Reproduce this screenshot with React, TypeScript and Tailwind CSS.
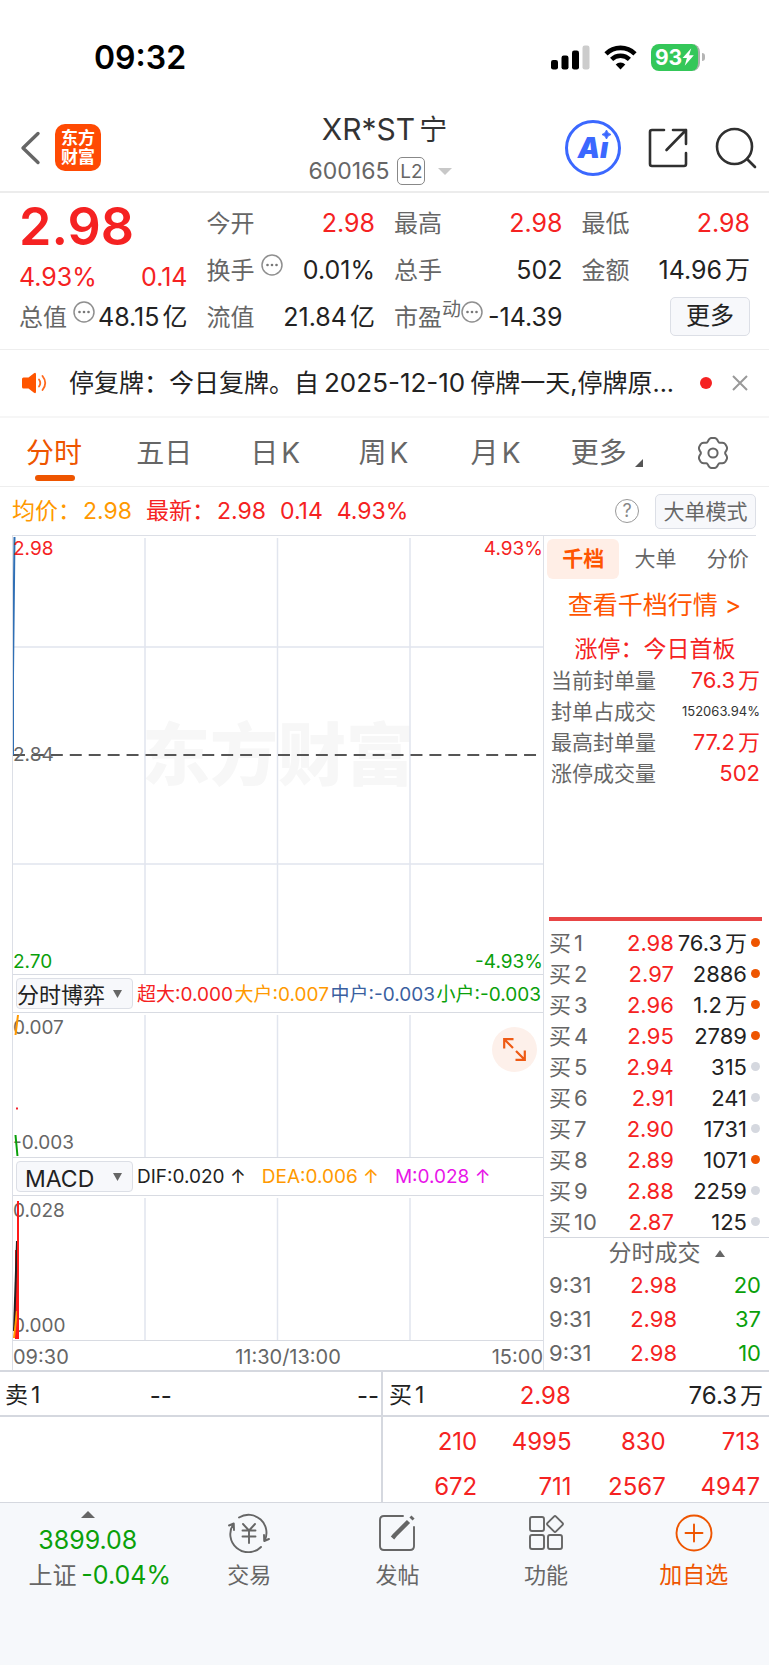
import type { ReactNode } from "react";

const RED = "text-[#f52222]";
const GREEN = "text-[#0aa00a]";

const bids = [
  { level: 1, price: "2.98", volume: "76.3", unit: "万", hot: true },
  { level: 2, price: "2.97", volume: "2886", unit: "", hot: true },
  { level: 3, price: "2.96", volume: "1.2", unit: "万", hot: true },
  { level: 4, price: "2.95", volume: "2789", unit: "", hot: true },
  { level: 5, price: "2.94", volume: "315", unit: "", hot: false },
  { level: 6, price: "2.91", volume: "241", unit: "", hot: false },
  { level: 7, price: "2.90", volume: "1731", unit: "", hot: false },
  { level: 8, price: "2.89", volume: "1071", unit: "", hot: true },
  { level: 9, price: "2.88", volume: "2259", unit: "", hot: false },
  { level: 10, price: "2.87", volume: "125", unit: "", hot: false },
];

const trades = [
  { time: "9:31", price: "2.98", volume: "20" },
  { time: "9:31", price: "2.98", volume: "37" },
  { time: "9:31", price: "2.98", volume: "10" },
];

const queue = [
  ["210", "4995", "830", "713"],
  ["672", "711", "2567", "4947"],
];

function Unit({ children }: { children: ReactNode }) {
  return <span className="ml-[3px]">{children}</span>;
}

function MoreDots() {
  return (
    <svg className="mb-3 h-[22px] w-[22px] shrink-0" viewBox="0 0 22 22" fill="none" aria-hidden="true">
      <circle cx="11" cy="11" r="10" stroke="#8f8f8f" strokeWidth="1.5" />
      <circle cx="6.5" cy="11" r="1.3" fill="#777" />
      <circle cx="11" cy="11" r="1.3" fill="#777" />
      <circle cx="15.5" cy="11" r="1.3" fill="#777" />
    </svg>
  );
}

function Metric({
  label,
  mark,
  dots,
  value,
  unit,
  tone = "text-[#222]",
}: {
  label: string;
  mark?: string;
  dots?: boolean;
  value: string;
  unit?: string;
  tone?: string;
}) {
  return (
    <div className="flex h-[47px] items-center whitespace-nowrap">
      <span className="text-2xl text-[#666]">{label}</span>
      {mark && <span className="mb-4 text-[19px] leading-none text-[#666]">{mark}</span>}
      {dots && <span className={mark ? "" : "ml-1.5"}><MoreDots /></span>}
      <span className={`ml-auto ${tone}`}>
        {value}
        {unit && <Unit>{unit}</Unit>}
      </span>
    </div>
  );
}

function StatusBar() {
  return (
    <div className="flex h-[104px] items-center justify-between pt-2.5 pr-16 pl-[94px] text-black">
      <span className="pt-0.5 text-[32px] leading-10 font-semibold">09:32</span>
      <div className="flex items-center gap-3.5">
        <svg className="h-[25px] w-[39px]" viewBox="0 0 39 25" aria-hidden="true">
          <rect x="0" y="15" width="7" height="9.5" rx="2.2" />
          <rect x="10.5" y="10.5" width="7" height="14" rx="2.2" />
          <rect x="21" y="5.5" width="7" height="19" rx="2.2" />
          <rect x="31.5" y="0.5" width="7" height="24" rx="2.2" fill="#ccc" />
        </svg>
        <svg className="h-[25px] w-[33px]" viewBox="0 0 33 25" fill="none" stroke="#000" aria-hidden="true">
          <path d="M2 8.8a20.6 20.6 0 0 1 29 0" strokeWidth="4.6" />
          <path d="M7.6 14.4a12.6 12.6 0 0 1 17.8 0" strokeWidth="4.4" />
          <path d="M16.500 24.500 11.700 19.600a6.800 6.800 0 0 1 9.600 0Z" fill="#000" stroke="none" />
        </svg>
        <div className="flex items-center">
          <div className="flex h-[27px] w-[49px] items-center justify-center rounded-lg border-r-2 border-[#a9b0ab] bg-[#34c759] text-white">
            <span className="text-[21px] leading-none font-bold">93</span>
            <svg className="h-[18px] w-3" viewBox="0 0 11 16" fill="#fff" aria-hidden="true">
              <path d="M8.500 0 0.500 9h4L2.500 16 10.800 6.500H6.500Z" />
            </svg>
          </div>
          <div className="ml-0.5 h-2 w-[3px] rounded-r-full bg-[#b5b5b5]" />
        </div>
      </div>
    </div>
  );
}

function Header() {
  return (
    <header className="grid h-[89px] grid-cols-[1fr_auto_1fr] items-center border-b-2 border-[#ececec] px-3">
      <div className="flex items-center gap-[14px] pl-2">
        <button aria-label="返回" className="block">
          <svg className="h-[34px] w-[21px]" viewBox="0 0 21 34" fill="none" stroke="#666" strokeWidth="3.400" strokeLinecap="round" strokeLinejoin="round">
            <path d="M18 2.500 3 17 18 31.500" />
          </svg>
        </button>
        <a href="#home" className="flex h-[47px] w-[46px] flex-col items-center justify-center rounded-[10px] bg-[#ff4a03] text-[17px] leading-[19px] font-bold text-white">
          <span>东方</span>
          <span>财富</span>
        </a>
      </div>
      <div className="flex flex-col items-center pt-1">
        <h1 className="text-[30px] leading-[42px] text-[#333]">XR*ST<span className="ml-1 text-[28px]">宁</span></h1>
        <button className="mr-2 flex h-10 items-center text-[23px] text-[#666]">
          600165
          <span className="ml-2 flex h-7 w-7 items-center justify-center rounded-[5px] border border-[#888] text-[19px] leading-none">L2</span>
          <svg className="ml-[13px] h-[7px] w-[14px]" viewBox="0 0 14 7" fill="#c8c8c8" aria-hidden="true"><path d="M0 0h14L7 7Z" /></svg>
        </button>
      </div>
      <div className="flex items-center justify-end gap-[27px]">
        <button aria-label="Ai" className="relative flex h-14 w-14 items-center justify-center rounded-full border-[3px] border-[#3b68ff] text-[28px] leading-none font-black text-[#3b68ff] italic">
          <span>Aı</span>
          <svg className="absolute top-[7px] right-[7px] h-[9px] w-[9px]" viewBox="0 0 10 10" fill="#3b68ff" aria-hidden="true">
            <path d="M5 0Q6 4 10 5Q6 6 5 10Q4 6 0 5Q4 4 5 0Z" stroke="#3b68ff" strokeWidth="1" />
          </svg>
        </button>
        <button aria-label="分享">
          <svg className="h-10 w-10" viewBox="0 0 40 40" fill="none" stroke="#303030" strokeWidth="2.600" strokeLinecap="round" strokeLinejoin="round">
            <path d="M16 2H4Q2 2 2 4V36Q2 38 4 38H36Q38 38 38 36V25M25 2H38V16M38 2 18.500 22" />
          </svg>
        </button>
        <button aria-label="搜索">
          <svg className="h-[42px] w-[42px]" viewBox="0 0 42 42" fill="none" stroke="#303030" strokeWidth="2.600" strokeLinecap="round">
            <circle cx="19.500" cy="19.500" r="17.500" />
            <path d="M32 32 40 40" />
          </svg>
        </button>
      </div>
    </header>
  );
}

function Summary() {
  return (
    <section className="grid grid-cols-4 gap-x-[19px] border-b border-[#eee] px-[19px] pt-[7px] pb-2 text-[25px]">
      <div>
        <div className={`h-[56px] text-[52px] leading-[54px] font-semibold ${RED}`}>2.98</div>
        <div className={`flex h-[38px] items-end justify-between leading-[34px] ${RED}`}>
          <span>4.93%</span>
          <span>0.14</span>
        </div>
        <Metric label="总值" dots value="48.15" unit="亿" />
      </div>
      <div>
        <Metric label="今开" value="2.98" tone={RED} />
        <Metric label="换手" dots value="0.01%" />
        <Metric label="流值" value="21.84" unit="亿" />
      </div>
      <div>
        <Metric label="最高" value="2.98" tone={RED} />
        <Metric label="总手" value="502" />
        <Metric label="市盈" mark="动" dots value="-14.39" />
      </div>
      <div>
        <Metric label="最低" value="2.98" tone={RED} />
        <Metric label="金额" value="14.96" unit="万" />
        <div className="flex h-[47px] items-center justify-end pb-[3px]">
          <button className="h-[39px] w-20 rounded-[5px] border border-[#dcdfe6] bg-[#f7f8fb] text-2xl leading-none text-[#222]">更多</button>
        </div>
      </div>
    </section>
  );
}

function Notice() {
  return (
    <section className="flex h-[68px] items-center border-b-2 border-[#f6f6f6] px-[21px]">
      <svg className="h-[22px] w-[27px] shrink-0" viewBox="0 0 27 22" fill="none" aria-hidden="true">
        <path d="M2.500 5.500h5L13 1.300Q15 0 15 2.500v17Q15 22 13 20.700L7.500 16.500h-5Q1 16.500 1 15V7Q1 5.500 2.500 5.500Z" fill="#ff5500" />
        <path d="M18 7.500q2.600 3.500 0 7" stroke="#ff6a1f" strokeWidth="1.800" strokeLinecap="round" />
        <path d="M21.500 4q5.500 7 0 14" stroke="#ff6a1f" strokeWidth="1.800" strokeLinecap="round" />
      </svg>
      <p className="ml-[21px] min-w-0 flex-1 truncate text-[25px] leading-9 text-[#222]">
        停复牌：今日复牌。自<span className="mx-[5px] text-[26px]">2025-12-10</span>停牌一天,停牌原...
      </p>
      <span className="ml-4 h-3 w-3 shrink-0 rounded-full bg-[#f52222]" />
      <button aria-label="关闭" className="ml-5 shrink-0">
        <svg className="h-4 w-4" viewBox="0 0 16 16" stroke="#999" strokeWidth="2"><path d="M1 1 15 15M15 1 1 15" /></svg>
      </button>
    </section>
  );
}

function gearOutline() {
  const points: string[] = [];
  for (let deg = 0; deg < 360; deg += 4) {
    const a = (deg * Math.PI) / 180;
    const r = 14 + 1.5 * Math.cos(6 * a - Math.PI) - 0.4 * Math.cos(12 * a);
    points.push(`${(17 + r * Math.cos(a)).toFixed(2)},${(17 + r * Math.sin(a)).toFixed(2)}`);
  }
  return points.join(" ");
}

function PeriodTabs() {
  const tab = "h-full text-left whitespace-nowrap";
  return (
    <nav className="grid h-[69px] grid-cols-[110fr_114fr_108fr_112fr_100fr_125fr_56fr] items-center border-b border-[#eee] pt-0.5 pr-[17px] pl-[26px] text-[28px] text-[#666]">
      <button className={`${tab} relative text-[#ee5500]`}>
        分时
        <span className="absolute bottom-[5px] left-[9px] h-1.5 w-10 rounded-full bg-[#ee5500]" />
      </button>
      <button className={tab}>五日</button>
      <button className={tab}>日<Unit>K</Unit></button>
      <button className={tab}>周<Unit>K</Unit></button>
      <button className={tab}>月<Unit>K</Unit></button>
      <button className={`${tab} flex items-center`}>
        更多
        <svg className="mt-5 ml-2 h-2 w-2" viewBox="0 0 8 8" fill="#555" aria-hidden="true"><path d="M8 0v8H0Z" /></svg>
      </button>
      <button aria-label="设置">
        <svg className="h-[34px] w-[34px]" viewBox="0 0 34 34" fill="none" stroke="#666" strokeWidth="2" strokeLinejoin="round">
          <polygon points={gearOutline()} />
          <circle cx="17" cy="17" r="4.600" />
        </svg>
      </button>
    </nav>
  );
}

function PriceLine() {
  return (
    <div className={`mr-[13px] ml-3 flex h-[49px] items-center border-b border-[#dcdfe6] text-[23px] whitespace-nowrap ${RED}`}>
      <span className="text-[#ff9900]">均价：<span className="ml-0.5">2.98</span></span>
      <span className="ml-3.5">最新：<span className="ml-0.5">2.98</span></span>
      <span className="ml-3.5">0.14</span>
      <span className="ml-3.5">4.93%</span>
      <button aria-label="说明" className="ml-auto flex h-6 w-6 items-center justify-center rounded-full border-[1.5px] border-[#999] text-lg leading-none text-[#888]">?</button>
      <button className="ml-4 h-[35px] w-[101px] rounded-[5px] border border-[#dcdfe6] bg-[#f7f8fb] text-[21px] leading-none text-[#666]">大单模式</button>
    </div>
  );
}

function GridLines({ rows }: { rows?: boolean }) {
  return (
    <g stroke="#e1e5ee" strokeWidth="1.500">
      <path d="M132.500 2V1000M265.500 2V1000M398.500 2V1000" vectorEffect="non-scaling-stroke" />
      {rows && <path d="M0 111H532M0 328H532" vectorEffect="non-scaling-stroke" />}
    </g>
  );
}

const panelLabel = "absolute text-[19px] leading-6";

function TrendChart() {
  return (
    <div className="relative h-[439px] border-b border-[#d8dbe2]">
      <div className="absolute inset-0 flex items-center justify-center text-[68px] leading-none font-black text-[#f7f7f7]">东方财富</div>
      <svg className="absolute inset-0 h-full w-full" viewBox="0 0 532 438" preserveAspectRatio="none" aria-hidden="true">
        <GridLines rows />
        <path d="M0 219H532" stroke="#555" strokeWidth="2" strokeDasharray="12 7" />
        <path d="M0 219V140L1.500 1" fill="none" stroke="#2f6fb5" strokeWidth="2" />
      </svg>
      <span className={`${panelLabel} top-px left-0 ${RED}`}>2.98</span>
      <span className={`${panelLabel} top-px right-0 ${RED}`}>4.93%</span>
      <span className={`${panelLabel} top-[207px] left-0 text-[#666]`}>2.84</span>
      <span className={`${panelLabel} bottom-0 left-0 ${GREEN}`}>2.70</span>
      <span className={`${panelLabel} right-0 bottom-0 ${GREEN}`}>-4.93%</span>
    </div>
  );
}

function IndicatorSelect({ label, options, pad }: { label: string; options: string[]; pad: string }) {
  return (
    <div className="relative ml-[3px] shrink-0">
      <select aria-label={label} className={`block h-[31px] w-[117px] appearance-none rounded-[4px] border border-[#dcdfe6] bg-[#f7f8fb] text-[#222] ${pad}`}>
        {options.map((o) => (
          <option key={o}>{o}</option>
        ))}
      </select>
      <svg className="pointer-events-none absolute top-[12px] right-[11px] h-2 w-[9px]" viewBox="0 0 9 8" fill="#666" aria-hidden="true"><path d="M0 0h9L4.500 8Z" /></svg>
    </div>
  );
}

function FlowPanel() {
  return (
    <>
      <div className="flex h-[38px] items-center border-b border-[#d8dbe2] whitespace-nowrap">
        <IndicatorSelect label="资金指标" options={["分时博弈"]} pad="text-[22px]" />
        <div className="flex flex-1 justify-between pt-[3px] pr-0.5 pl-1 text-[19px]">
          <span className={RED}>超大:0.000</span>
          <span className="text-[#ff9900]">大户:0.007</span>
          <span className="text-[#3a5fa0]">中户:-0.003</span>
          <span className={GREEN}>小户:-0.003</span>
        </div>
      </div>
      <div className="relative h-[145px] border-b border-[#d8dbe2]">
        <span className={`${panelLabel} top-[3px] left-0 text-[#666]`}>0.007</span>
        <span className={`${panelLabel} bottom-0.5 left-0 text-[#666]`}>-0.003</span>
        <svg className="absolute inset-0 h-full w-full" viewBox="0 0 532 144" preserveAspectRatio="none" fill="none" aria-hidden="true">
          <GridLines />
          <path d="M2.500 22 5 2" stroke="#ff9900" strokeWidth="2" />
          <path d="M2.500 122 4.500 143" stroke="#0aa00a" strokeWidth="2" />
          <path d="M3 95.500h2" stroke="#f5222d" strokeWidth="2" />
        </svg>
        <button aria-label="展开" className="absolute top-3.5 right-[6px] flex h-[45px] w-[45px] items-center justify-center rounded-full bg-[#fdf0ea]">
          <svg className="h-[23px] w-[23px]" viewBox="0 0 23 23" fill="none" stroke="#ee5a14" strokeWidth="2.200">
            <path d="M1.200 10.500V1.200H10.500M1.500 1.500 10 10M21.800 12.500V21.800H12.500M21.500 21.500 13 13" />
          </svg>
        </button>
      </div>
    </>
  );
}

function MacdPanel() {
  return (
    <>
      <div className="flex h-[38px] items-center border-b border-[#d8dbe2] whitespace-nowrap">
        <IndicatorSelect label="技术指标" options={["MACD"]} pad="pl-2 text-[23px]" />
        <div className="flex gap-4 pt-0.5 pl-1 text-[19px]">
          <span className="text-[#222]">DIF:0.020 ↑</span>
          <span className="text-[#ff9900]">DEA:0.006 ↑</span>
          <span className="text-[#e815e8]">M:0.028 ↑</span>
        </div>
      </div>
      <div className="relative h-[145px] border-b border-[#d8dbe2]">
        <span className={`${panelLabel} top-[3px] left-0 text-[#666]`}>0.028</span>
        <span className={`${panelLabel} bottom-0.5 left-0 text-[#666]`}>0.000</span>
        <svg className="absolute inset-0 h-full w-full" viewBox="0 0 532 144" preserveAspectRatio="none" fill="none" aria-hidden="true">
          <GridLines />
          <path d="M3 54V143" stroke="#ff1a1a" strokeWidth="2" />
          <path d="M1 135 4 45" stroke="#222" strokeWidth="2" />
          <path d="M1 142 4 115" stroke="#ff9900" strokeWidth="2" />
          <path d="M5 5V143" stroke="#ff1a1a" strokeWidth="2" />
        </svg>
      </div>
    </>
  );
}

function SidePanel() {
  const stat = "flex h-[31px] items-center justify-between";
  return (
    <aside className="flex w-[225px] shrink-0 flex-col text-[22px] whitespace-nowrap">
      <div className="mt-[3px] grid h-10 grid-cols-3 pr-[5px] pl-[3px] text-[21px] text-[#666]">
        <button className="rounded-md bg-[#ffeee6] font-bold text-[#ff5500]">千档</button>
        <button>大单</button>
        <button>分价</button>
      </div>
      <a href="#depth" className="mt-2 mr-1 block text-center text-[25px] leading-9 text-[#ff5500]">查看千档行情 &gt;</a>
      <div className={`mt-2 mr-[3px] text-center text-[23px] leading-9 ${RED}`}>涨停：今日首板</div>
      <div className={`-mt-0.5 pr-[9px] pl-[7px] ${RED}`}>
        <div className={stat}><span className="text-[21px] text-[#666]">当前封单量</span><span>76.3<Unit>万</Unit></span></div>
        <div className={stat}><span className="text-[21px] text-[#666]">封单占成交</span><span className="text-[13px] text-[#333]">152063.94%</span></div>
        <div className={stat}><span className="text-[21px] text-[#666]">最高封单量</span><span>77.2<Unit>万</Unit></span></div>
        <div className={stat}><span className="text-[21px] text-[#666]">涨停成交量</span><span>502</span></div>
      </div>
      <div className="mt-[128px] mr-[7px] ml-[5px] h-1 bg-[#e84545]" />
      <div className="mt-[6px] border-b border-[#d5d8df] pr-[9px] pl-[5px]">
        <table className="w-full border-collapse leading-[30px]">
          <tbody>
            {bids.map((b) => (
              <tr key={b.level} className="h-[31px]">
                <td className="w-[46px] p-0 text-[#666]">买<Unit>{b.level}</Unit></td>
                <td className={`w-[77px] p-0 text-right ${RED}`}>{b.price}</td>
                <td className="p-0 text-right text-[#222]">{b.volume}{b.unit && <Unit>{b.unit}</Unit>}</td>
                <td className="w-[13px] p-0"><span className={`ml-auto block h-[9px] w-[9px] rounded-full ${b.hot ? "bg-[#ee5500]" : "bg-[#d5d8df]"}`} /></td>
              </tr>
            ))}
          </tbody>
        </table>
      </div>
      <button className="flex h-[30px] items-center justify-center pl-5 text-[23px] text-[#666]">
        分时成交
        <svg className="ml-3.5 h-[7px] w-[10px]" viewBox="0 0 10 7" fill="#666" aria-hidden="true"><path d="M0 7h10L5 0Z" /></svg>
      </button>
      <div className="pr-2 pl-[5px]">
        <table className="w-full border-collapse leading-[33px]">
          <tbody>
            {trades.map((t) => (
              <tr key={t.volume} className="h-[34px]">
                <td className="w-[46px] p-0 text-[#666]">{t.time}</td>
                <td className={`w-[82px] p-0 text-right ${RED}`}>{t.price}</td>
                <td className={`p-0 text-right ${GREEN}`}>{t.volume}</td>
              </tr>
            ))}
          </tbody>
        </table>
      </div>
    </aside>
  );
}

function TopOfBook() {
  const row = "grid h-[45px] grid-cols-3 items-center border-b-2 border-[#d5d8df] pt-1";
  return (
    <section className="grid grid-cols-[383fr_386fr] border-t-2 border-b border-[#d5d8df] text-2xl text-[#222]">
      <div className="border-r-2 border-[#d5d8df]">
        <div className={`${row} pr-0.5 pl-[5px]`}>
          <span className="text-[23px]">卖<Unit>1</Unit></span>
          <span className="pl-5">--</span>
          <span className="text-right">--</span>
        </div>
      </div>
      <div>
        <div className={`${row} px-1.5`}>
          <span className="text-[23px]">买<Unit>1</Unit></span>
          <span className={`pl-1.5 ${RED}`}>2.98</span>
          <span className="text-right">76.3<span className="ml-[3px] text-[23px]">万</span></span>
        </div>
        <div className="pt-0.5 pr-[9px]">
          <table className={`mb-[-7px] w-full table-fixed border-collapse ${RED}`}>
            <tbody>
              {queue.map((values) => (
                <tr key={values[0]} className="h-[45px]">
                  {values.map((v) => (
                    <td key={v} className="p-0 text-right">{v}</td>
                  ))}
                </tr>
              ))}
            </tbody>
          </table>
        </div>
      </div>
    </section>
  );
}

function Footer() {
  const item = "flex flex-col items-center gap-1.5 pt-[10px] text-[22px] leading-8";
  const svg = { fill: "none", stroke: "currentColor", strokeWidth: 1.9, strokeLinecap: "round", strokeLinejoin: "round" } as const;
  return (
    <footer className="grid flex-1 grid-cols-[176fr_148fr_149fr_149fr_147fr] bg-[#f6f8fb] pr-0.5 pb-[72px] text-[#666]">
      <button className="flex flex-col items-center pt-2 text-2xl whitespace-nowrap">
        <svg className="h-[7px] w-[14px]" viewBox="0 0 14 7" fill="#666" aria-hidden="true"><path d="M0 7h14L7 0Z" /></svg>
        <span className={`mt-[5px] text-[25px] leading-[35px] ${GREEN}`}>3899.08</span>
        <span className="ml-6 leading-[35px]">上证 <span className={`-ml-0.5 text-[25px] ${GREEN}`}>-0.04%</span></span>
      </button>
      <button className={item}>
        <svg className="h-10 w-[44px]" viewBox="0 0 44 40" {...svg} aria-hidden="true">
          <path d="M12 4.500A18 18 0 0 1 37.500 28M34 34A18 18 0 0 1 6.500 11M2 12.500 6.800 10.500 7 17M42 26 37.200 28 37 22" />
          <path d="M16 11l6 6.500L28 11M15.500 17.500h13M15.500 23.500h13M22 17.500V30" />
        </svg>
        交易
      </button>
      <button className={item}>
        <svg className="h-10 w-10" viewBox="0 0 40 40" {...svg} aria-hidden="true">
          <path d="M26 3H7Q3 3 3 7V33Q3 37 7 37H33Q37 37 37 33V14" />
          <path d="M31.500 8.500 18 22 15.500 25" strokeWidth="4.400" strokeLinecap="butt" />
          <path d="M34 6 36 4" strokeWidth="4.400" strokeLinecap="butt" />
        </svg>
        发帖
      </button>
      <button className={item}>
        <svg className="h-10 w-10" viewBox="0 0 40 40" {...svg} aria-hidden="true">
          <rect x="4" y="4" width="14" height="14" rx="2" />
          <rect x="4" y="22" width="14" height="14" rx="2" />
          <rect x="22" y="22" width="14" height="14" rx="2" />
          <rect x="23" y="5" width="12" height="12" rx="1.500" transform="rotate(45 29 11)" />
        </svg>
        功能
      </button>
      <button className={`${item} text-[#ee5500]`}>
        <svg className="h-10 w-10" viewBox="0 0 40 40" {...svg} aria-hidden="true">
          <circle cx="20" cy="20" r="17.500" />
          <path d="M20 11.500V28.500M11.500 20H28.500" />
        </svg>
        <span className="text-[23px]">加自选</span>
      </button>
    </footer>
  );
}

export default function App() {
  return (
    <div className="flex min-h-screen flex-col bg-white font-['Inter','Noto_Sans_CJK_SC',sans-serif]" lang="zh-CN">
      <StatusBar />
      <Header />
      <main>
        <Summary />
        <Notice />
        <PeriodTabs />
        <PriceLine />
        <div className="flex">
          <div className="ml-3 min-w-0 flex-1 border-r border-l border-[#dcdfe6]">
            <TrendChart />
            <FlowPanel />
            <MacdPanel />
            <div className="grid grid-cols-3 pt-1 text-[20px] leading-[25px] text-[#666]">
              <span>09:30</span>
              <span className="pl-5 text-center">11:30/13:00</span>
              <span className="text-right">15:00</span>
            </div>
          </div>
          <SidePanel />
        </div>
        <TopOfBook />
      </main>
      <Footer />
    </div>
  );
}
